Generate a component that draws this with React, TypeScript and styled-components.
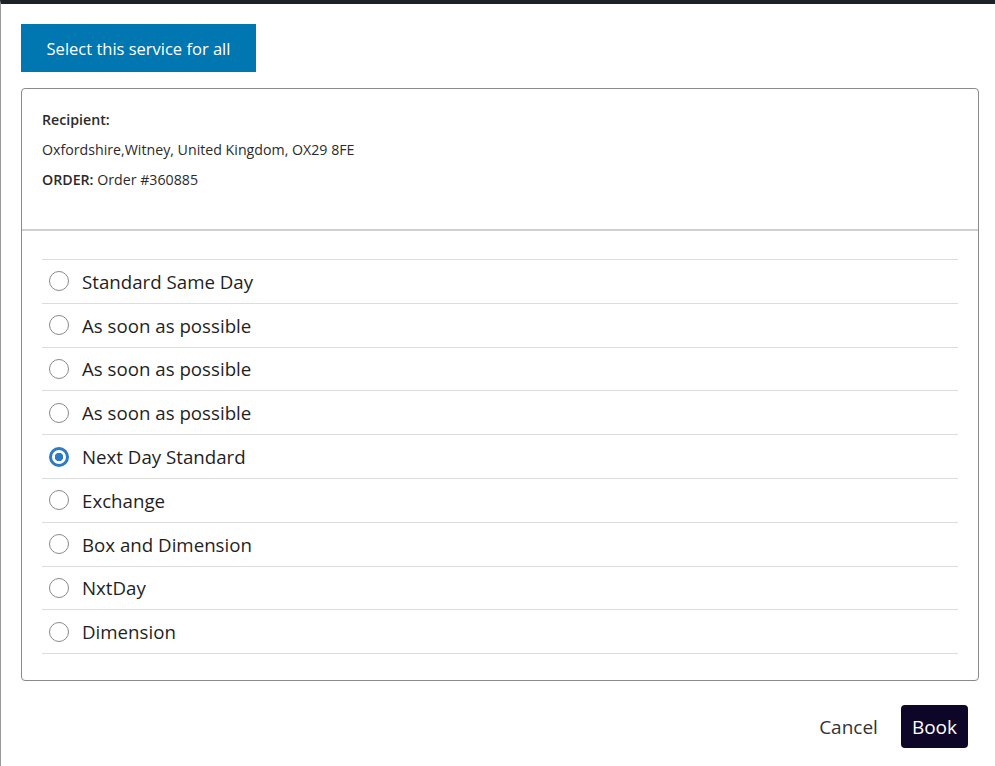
import { ReactElement, useState } from "react";
import styled, { createGlobalStyle } from "styled-components";

const GlobalStyle = createGlobalStyle`
  html, body {
    margin: 0;
    padding: 0;
    background: #ffffff;
  }
  body {
    font-family: "Open Sans", "Noto Sans", sans-serif;
    color: #212529;
  }
`;

const services = [
  "Standard Same Day",
  "As soon as possible",
  "As soon as possible",
  "As soon as possible",
  "Next Day Standard",
  "Exchange",
  "Box and Dimension",
  "NxtDay",
  "Dimension",
];

export default function App(): ReactElement {
  const [selected, setSelected] = useState<number>(4);

  return (
    <>
      <GlobalStyle />
      <StyledModal>
        <StyledBody>
          <StyledSelectAll type="button">Select this service for all</StyledSelectAll>
          <StyledCard>
            <StyledRecipient>
              <StyledLabel>Recipient:</StyledLabel>
              <StyledLine>Oxfordshire,Witney, United Kingdom, OX29 8FE</StyledLine>
              <StyledLine>
                <StyledLabel>ORDER:</StyledLabel> Order #360885
              </StyledLine>
            </StyledRecipient>
            <StyledList>
              {services.map((name, i) => (
                <StyledOption key={i}>
                  <StyledRadio
                    type="radio"
                    name="service"
                    checked={selected === i}
                    onChange={() => setSelected(i)}
                  />
                  {name}
                </StyledOption>
              ))}
            </StyledList>
          </StyledCard>
        </StyledBody>
        <StyledFooter>
          <StyledCancel type="button">Cancel</StyledCancel>
          <StyledBook type="button">Book</StyledBook>
        </StyledFooter>
      </StyledModal>
    </>
  );
}

const StyledModal = styled.div(() => {
  return {
    minHeight: "766px",
    boxSizing: "border-box",
    borderTop: "4px solid #1e2226",
    borderLeft: "1px solid #9a9a9a",
    display: "flex",
    flexDirection: "column",
  };
});

const StyledBody = styled.div(() => {
  return {
    padding: "20px 16px 0 20px",
    display: "flex",
    flexDirection: "column",
    alignItems: "flex-start",
    gap: "16px",
  };
});

const StyledSelectAll = styled.button(() => {
  return {
    width: "235px",
    height: "48px",
    border: "none",
    background: "#0077b0",
    color: "#ffffff",
    fontFamily: "inherit",
    fontSize: "16.5px",
    cursor: "pointer",
  };
});

const StyledCard = styled.div(() => {
  return {
    alignSelf: "stretch",
    border: "1px solid #8a8a8a",
    borderRadius: "4px",
    paddingBottom: "26px",
  };
});

const StyledRecipient = styled.div(() => {
  return {
    padding: "20px 20px 38px",
    borderBottom: "2px solid #d0d0d0",
    fontSize: "14.2px",
    color: "#2b2b2b",
    display: "flex",
    flexDirection: "column",
    gap: "8px",
    lineHeight: "22px",
  };
});

const StyledLabel = styled.span(() => {
  return {
    fontWeight: 600,
  };
});

const StyledLine = styled.div(() => {
  return {};
});

const StyledList = styled.div(() => {
  return {
    margin: "28px 20px 0",
    borderTop: "1px solid #dcdcdc",
  };
});

const StyledOption = styled.label(() => {
  return {
    display: "flex",
    alignItems: "center",
    gap: "13px",
    height: "42.8px",
    padding: "0 7px",
    borderBottom: "1px solid #dcdcdc",
    fontSize: "18.7px",
    color: "#1f1f1f",
    cursor: "pointer",
  };
});

const StyledRadio = styled.input(() => {
  return {
    appearance: "none",
    margin: 0,
    width: "20px",
    height: "20px",
    borderRadius: "50%",
    border: "1px solid #8a8a8a",
    background: "#ffffff",
    boxSizing: "border-box",
    cursor: "pointer",
    ["&:checked"]: {
      border: "3px solid #2c7bc4",
      background: "radial-gradient(circle, #2c7bc4 0 4px, #ffffff 4.5px)",
    },
  };
});

const StyledFooter = styled.div(() => {
  return {
    display: "flex",
    justifyContent: "flex-end",
    alignItems: "center",
    gap: "23px",
    padding: "24px 27px 0 0",
  };
});

const StyledCancel = styled.button(() => {
  return {
    border: "none",
    background: "none",
    padding: 0,
    fontFamily: "inherit",
    fontSize: "19px",
    color: "#333333",
    cursor: "pointer",
  };
});

const StyledBook = styled.button(() => {
  return {
    height: "43px",
    padding: "0 11px",
    border: "none",
    borderRadius: "4px",
    background: "#0d0628",
    color: "#ffffff",
    fontFamily: "inherit",
    fontSize: "19px",
    cursor: "pointer",
  };
});
